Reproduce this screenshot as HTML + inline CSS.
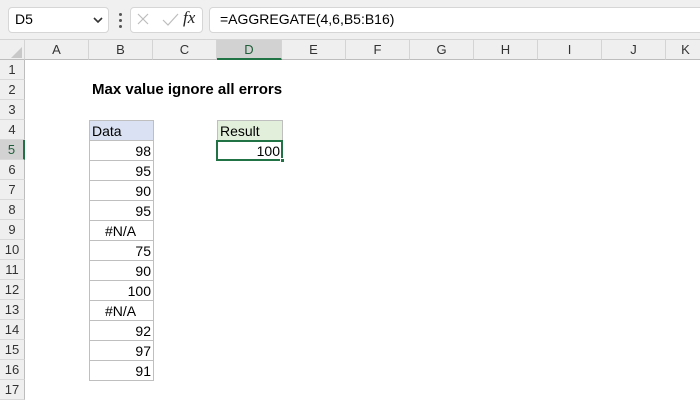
<!DOCTYPE html>
<html><head><meta charset="utf-8"><style>
*{margin:0;padding:0;box-sizing:border-box}
body{width:700px;height:400px;overflow:hidden;background:#fff;font-family:"Liberation Sans",Arial,sans-serif;font-size:14px;color:#000;position:relative}
.a{position:absolute}
.top{left:0;top:0;width:700px;height:40px;background:#f0f0f0;border-bottom:1px solid #d4d4d4}
.box{background:#fff;border:1px solid #d6d6d6;border-radius:4px}
.ch{top:40px;height:20px;background:#efefef;border-right:1px solid #d4d4d4;border-bottom:1px solid #bdbdbd;text-align:center;line-height:20px;color:#333;font-size:13px}
.rh{left:0;width:25px;height:20px;background:#efefef;border-bottom:1px solid #d9d9d9;border-right:1px solid #bdbdbd;text-align:center;line-height:20px;color:#333;font-size:13px}
.c{left:89px;width:65px;height:21px;border:1px solid #bfbfbf;text-align:right;padding-right:2px;line-height:20px;font-size:14px}
</style></head><body>
<div class="a top"></div>
<div class="a box" style="left:8px;top:7px;width:101px;height:26px;"></div>
<div class="a" style="left:15px;top:11px;font-size:14px">D5</div>
<svg class="a" style="left:93px;top:16px" width="10" height="8"><path d="M1 2 L5 6 L9 2" stroke="#333" stroke-width="1.6" fill="none"/></svg>
<div class="a" style="left:119px;top:13px;width:3px;height:3px;background:#555;border-radius:2px"></div>
<div class="a" style="left:119px;top:19px;width:3px;height:3px;background:#555;border-radius:2px"></div>
<div class="a" style="left:119px;top:25px;width:3px;height:3px;background:#555;border-radius:2px"></div>
<div class="a box" style="left:130px;top:7px;width:73px;height:26px;"></div>
<svg class="a" style="left:133px;top:10px" width="70" height="20"><path d="M5 4 L15 14 M15 4 L5 14" stroke="#bdbdbd" stroke-width="1.2"/><path d="M30 10 L35 15 L45 4" stroke="#bdbdbd" stroke-width="1.2" fill="none"/></svg>
<div class="a" style="left:183px;top:8px;font-family:'Liberation Serif',serif;font-style:italic;font-size:17px;color:#222">fx</div>
<div class="a box" style="left:209px;top:7px;width:500px;height:26px;"></div>
<div class="a" style="left:220px;top:11px;font-size:14px">=AGGREGATE(4,6,B5:B16)</div>
<div class="a ch" style="left:0;width:25px"></div>
<svg class="a" style="left:8px;top:46px" width="16" height="14"><path d="M14 1 L14 12 L3 12 Z" fill="#c8c8c8"/></svg>
<div class="a ch" style="left:25px;width:64px">A</div>
<div class="a ch" style="left:89px;width:64px">B</div>
<div class="a ch" style="left:153px;width:64px">C</div>
<div class="a ch" style="left:217px;width:65px;background:#d2d2d2;border-bottom:2px solid #217346;color:#1f5e3a">D</div>
<div class="a ch" style="left:282px;width:64px">E</div>
<div class="a ch" style="left:346px;width:64px">F</div>
<div class="a ch" style="left:410px;width:64px">G</div>
<div class="a ch" style="left:474px;width:64px">H</div>
<div class="a ch" style="left:538px;width:64px">I</div>
<div class="a ch" style="left:602px;width:64px">J</div>
<div class="a ch" style="left:666px;width:40px">K</div>
<div class="a rh" style="top:60px">1</div>
<div class="a rh" style="top:80px">2</div>
<div class="a rh" style="top:100px">3</div>
<div class="a rh" style="top:120px">4</div>
<div class="a rh" style="top:140px;background:#d2d2d2;border-right:2px solid #217346;color:#1f5e3a">5</div>
<div class="a rh" style="top:160px">6</div>
<div class="a rh" style="top:180px">7</div>
<div class="a rh" style="top:200px">8</div>
<div class="a rh" style="top:220px">9</div>
<div class="a rh" style="top:240px">10</div>
<div class="a rh" style="top:260px">11</div>
<div class="a rh" style="top:280px">12</div>
<div class="a rh" style="top:300px">13</div>
<div class="a rh" style="top:320px">14</div>
<div class="a rh" style="top:340px">15</div>
<div class="a rh" style="top:360px">16</div>
<div class="a rh" style="top:380px">17</div>
<div class="a" style="left:92px;top:81px;font-weight:bold;font-size:15px">Max value ignore all errors</div>
<div class="a c" style="top:120px;background:#d9e1f2;text-align:left;padding-left:2px">Data</div>
<div class="a c" style="top:140px">98</div>
<div class="a c" style="top:160px">95</div>
<div class="a c" style="top:180px">90</div>
<div class="a c" style="top:200px">95</div>
<div class="a c" style="top:220px;text-align:center">#N/A</div>
<div class="a c" style="top:240px">75</div>
<div class="a c" style="top:260px">90</div>
<div class="a c" style="top:280px">100</div>
<div class="a c" style="top:300px;text-align:center">#N/A</div>
<div class="a c" style="top:320px">92</div>
<div class="a c" style="top:340px">97</div>
<div class="a c" style="top:360px">91</div>
<div class="a c" style="left:217px;top:120px;width:66px;background:#e2efda;text-align:left;padding-left:2px">Result</div>
<div class="a" style="left:216px;top:140px;width:67px;height:21px;border:2px solid #217346;text-align:right;padding-right:1px;line-height:18px;font-size:14px">100</div>
<div class="a" style="left:280px;top:158px;width:5px;height:5px;background:#217346;border:1px solid #fff"></div>
</body></html>
